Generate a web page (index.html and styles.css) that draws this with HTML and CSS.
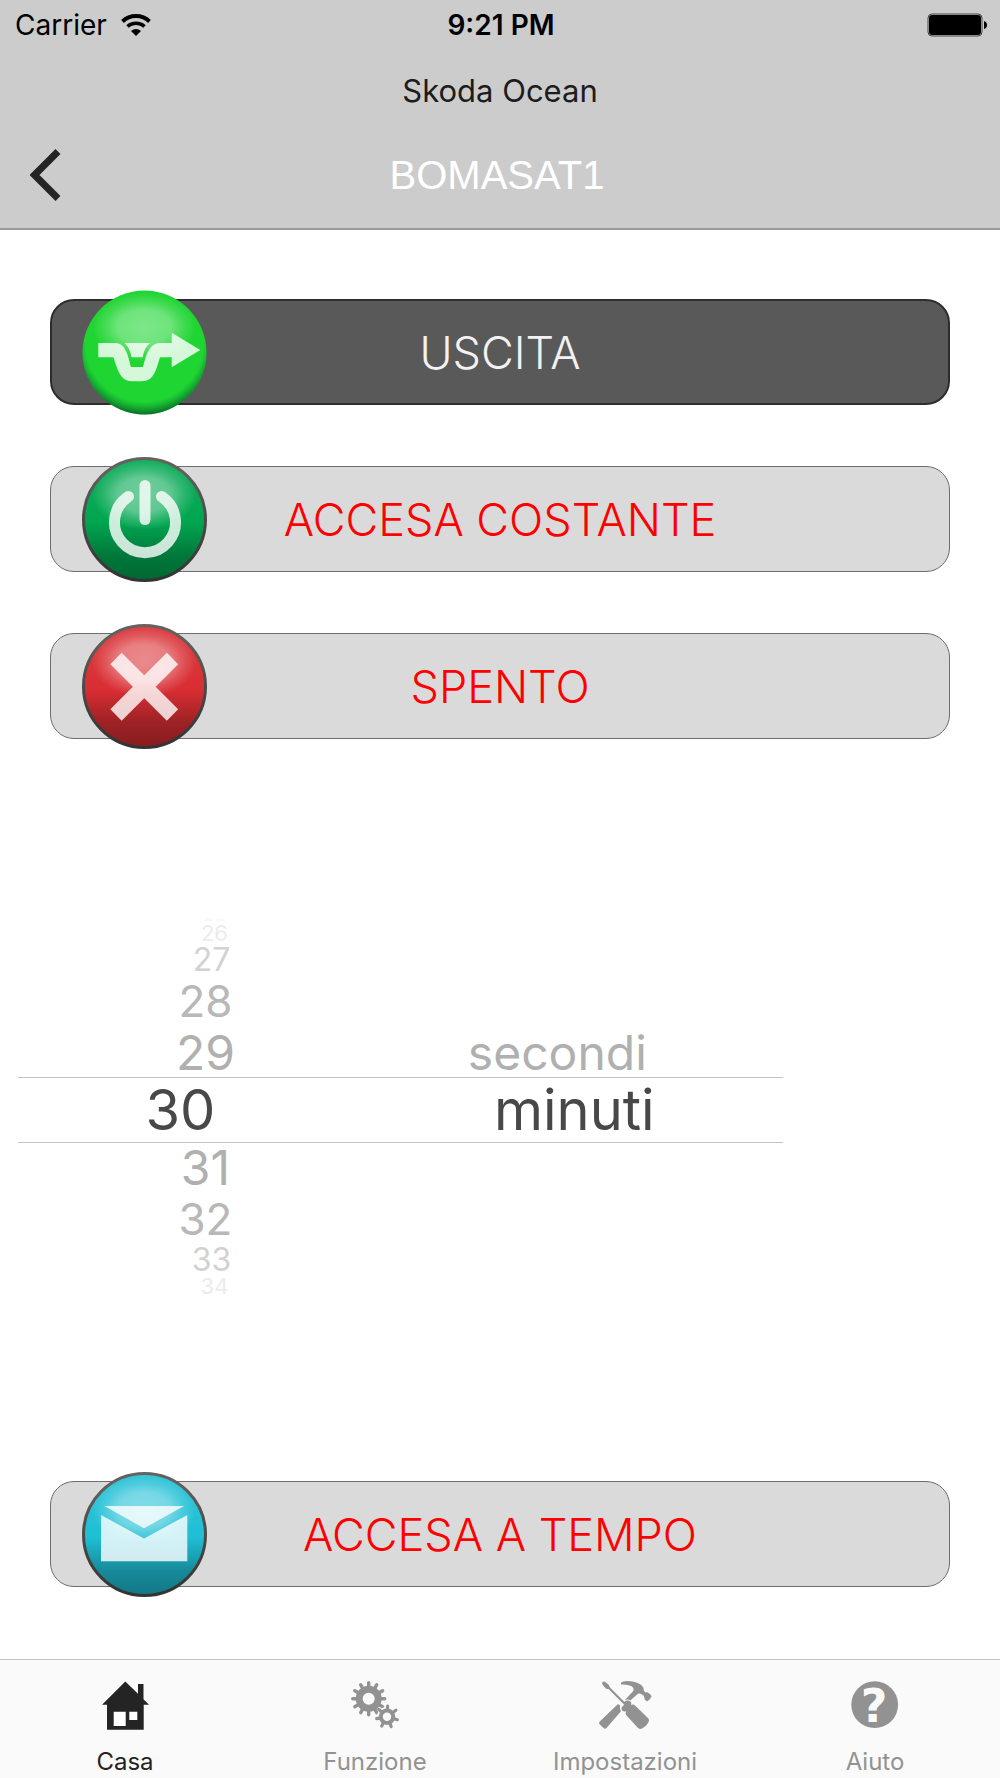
FILE: index.html
```html
<!DOCTYPE html>
<html lang="it">
<head>
<meta charset="UTF-8">
<meta name="viewport" content="width=device-width, initial-scale=1.0">
<title>BOMASAT1</title>
<link rel="stylesheet" href="styles.css">
</head>
<body>
    <header class="header">
        <div class="status">
            <div class="carrier">
                <span>Carrier</span>
                <svg width="30" height="22" viewBox="0 0 30 22" fill="none" stroke="#000" stroke-width="4">
                    <path d="M1.500 7.500C9 .3 21 .3 28.500 7.500"/>
                    <path d="M6.500 12.500C11 8.200 19 8.200 23.500 12.500" stroke-width="3.500"/>
                    <path d="M10 17C13 14.200 17 14.200 20 17L15 22Z" fill="#000" stroke="none"/>
                </svg>
            </div>
            <span class="time">9:21 PM</span>
            <svg class="battery" width="60" height="24" viewBox="0 0 60 24">
                <rect x="1" y="1" width="54" height="22" rx="4" fill="none" stroke="#444"/>
                <rect x="2" y="2" width="52" height="20" rx="3"/>
                <path d="M57 8q3 1 3 4t-3 4z"/>
            </svg>
        </div>
        <p class="vehicle">Skoda Ocean</p>
        <div class="nav">
            <button class="back" aria-label="Indietro">
                <svg width="31" height="52" viewBox="0 0 31 52"><path d="M28 2.500L4.500 26L28 49.500" fill="none" stroke="#242424" stroke-width="7"/></svg>
            </button>
            <h1>BOMASAT1</h1>
        </div>
    </header>

    <main class="main">
        <button class="action dark">
            <svg class="ball" viewBox="0 0 125 125">
                <defs>
                    <linearGradient id="gloss" x1="0" y1="0" x2="0" y2="1">
                        <stop offset="0" stop-color="#fff" stop-opacity=".08"/>
                        <stop offset=".5" stop-color="#fff" stop-opacity="0"/>
                        <stop offset=".52" stop-color="#000" stop-opacity="0"/>
                        <stop offset=".8" stop-color="#000" stop-opacity=".28"/>
                        <stop offset="1" stop-color="#000" stop-opacity=".38"/>
                    </linearGradient>
                    <radialGradient id="shine">
                        <stop offset="0" stop-color="#fff" stop-opacity=".42"/>
                        <stop offset=".5" stop-color="#fff" stop-opacity=".36"/>
                        <stop offset=".75" stop-color="#fff" stop-opacity=".16"/>
                        <stop offset="1" stop-color="#fff" stop-opacity="0"/>
                    </radialGradient>
                    <radialGradient id="edge" cx=".5" cy=".42" r=".58">
                        <stop offset=".82" stop-color="#063" stop-opacity="0"/>
                        <stop offset="1" stop-color="#032" stop-opacity=".65"/>
                    </radialGradient>
                    <linearGradient id="rim" x1="0" y1="0" x2="0" y2="1">
                        <stop offset="0" stop-color="#66625f"/>
                        <stop offset="1" stop-color="#333"/>
                    </linearGradient>
                </defs>
                <circle cx="62.500" cy="62.500" r="62" fill="#1fd532"/>
                <circle cx="62.500" cy="62.500" r="62" fill="url(#edge)"/>
                <ellipse cx="62" cy="37" rx="52" ry="35" fill="url(#shine)"/>
                <g fill="#fff" fill-opacity=".82">
                    <path d="M16.300 53H33C44 53 46 66 49 77H61C64 66 67 53 78 53H89.700V42.700L118.300 60L89.700 77.300V67.300H78C74 80 72 91.300 60 91.300H50C38 91.300 36 80 31.300 67.300H16.300Z"/>
                    <path d="M42.500 53H68Q62 58 60.700 67.300H49.500Q48 58 42.500 53Z"/>
                </g>
            </svg>
            USCITA
        </button>
        <button class="action">
            <svg class="ball" viewBox="0 0 125 125">
                <circle cx="62.500" cy="62.500" r="61" fill="#00a650"/>
                <circle cx="62.500" cy="62.500" r="61" fill="url(#gloss)" stroke="url(#rim)" stroke-width="3"/>
                <ellipse cx="62" cy="38" rx="52" ry="35" fill="url(#shine)"/>
                <g fill="none" stroke="#fff" stroke-opacity=".8" stroke-width="11" stroke-linecap="round">
                    <path d="M63 28.500V62.500"/>
                    <path d="M46.500 39.500A30.500 30.500 0 1 0 79.500 39.500"/>
                </g>
            </svg>
            ACCESA COSTANTE
        </button>
        <button class="action">
            <svg class="ball" viewBox="0 0 125 125">
                <circle cx="62.500" cy="62.500" r="61" fill="#d92e33"/>
                <circle cx="62.500" cy="62.500" r="61" fill="url(#gloss)" stroke="url(#rim)" stroke-width="3"/>
                <ellipse cx="62" cy="38" rx="52" ry="35" fill="url(#shine)"/>
                <path d="M34 34.500L90.500 91M90.500 34.500L34 91" fill="none" stroke="#fff" stroke-width="16" opacity=".8"/>
            </svg>
            SPENTO
        </button>

        <div class="picker">
            <div class="row r5"><span>25</span></div>
            <div class="row r4"><span>26</span></div>
            <div class="row r3"><span>27</span></div>
            <div class="row r2"><span>28</span></div>
            <div class="row r1"><span>29</span><span>secondi</span></div>
            <div class="row selected"><span>30</span><span>minuti</span></div>
            <div class="row r1"><span>31</span></div>
            <div class="row r2"><span>32</span></div>
            <div class="row r3"><span>33</span></div>
            <div class="row r4"><span>34</span></div>
        </div>

        <button class="action">
            <svg class="ball" viewBox="0 0 125 125">
                <circle cx="62.500" cy="62.500" r="61" fill="#1fbfd5"/>
                <circle cx="62.500" cy="62.500" r="61" fill="url(#gloss)" stroke="url(#rim)" stroke-width="3"/>
                <ellipse cx="62" cy="38" rx="52" ry="35" fill="url(#shine)"/>
                <path d="M22.500 34H102L62 56.300ZM19 43L62 66.500L105.300 43V89.300H19Z" fill="#fff" fill-opacity=".8"/>
            </svg>
            ACCESA A TEMPO
        </button>
    </main>

    <nav class="tabs">
        <a class="tab active" href="#casa">
            <svg width="56" height="52" viewBox="0 0 56 52">
                <path d="M28.300 1.500L41 13.800V4H46.500V19.200L52 24.700H46.700V49.700H10V24.700H5Z" fill="currentColor"/>
                <path d="M16.700 31.700H28.700V46H16.700ZM32.300 31.700H40.300V40H32.300Z" fill="#fff"/>
            </svg>
            Casa
        </a>
        <a class="tab" href="#funzione">
            <svg width="56" height="52" viewBox="0 0 56 52">
                <g transform="translate(21.700 18.700)">
                    <path d="M0-16V16M-16 0H16M8-13.900L-8 13.900M13.900-8L-13.900 8M-8-13.900L8 13.900M-13.900-8L13.900 8" stroke="currentColor" stroke-width="3.400" stroke-linecap="round"/>
                    <circle r="13" fill="currentColor"/>
                    <circle r="6" fill="#fafafa"/>
                </g>
                <g transform="translate(40 36.700)">
                    <circle r="10" fill="#fafafa"/>
                    <path d="M0 0L.6-10.500M0 0L8.900-6.400M0 0L10.300 3M0 0L4.200 9.800M0 0L-5.300 9.300M0 0L-10.300 1.900M0 0L-8.200-7.300" stroke="currentColor" stroke-width="3.200" stroke-linecap="round"/>
                    <circle r="8.300" fill="currentColor"/>
                    <circle r="4.200" fill="#fafafa"/>
                </g>
            </svg>
            Funzione
        </a>
        <a class="tab" href="#impostazioni">
            <svg width="56" height="52" viewBox="0 0 56 52" fill="currentColor">
                <path d="M24 2.500Q26 1 30 1Q42 1 46.300 7.500Q46.500 11 48.500 12.500Q51 11.500 54.500 16Q54.500 18 50.500 21.300Q47 20.500 47 16Q44 12.500 41 13.700L33.500 20.200Q30 19 27.700 20.200L36.500 10.700Q37 7 34 6Q30 4 24 4.500Z"/>
                <path d="M21 24L23 25.500Q22.500 29 24 31.300L9.500 48Q8 49.500 6.500 48L2.300 44Q1.500 42.500 3 41.300Z"/>
                <path d="M5 3.500Q5.500 1 7.500 1.500L12 5L13 9H9.500L7 6.500Z"/>
                <path d="M11 7L28 24" fill="none" stroke="currentColor" stroke-width="2.200"/>
                <path d="M27 22Q31 19.500 33.500 21.500Q35 23 34 25Q36.500 24 38 25.500L51 38Q53 40 51 43Q49 47 45 48.500Q43 49.500 41 48L29.500 35.500Q28 34 29 31.300Q25.500 32 24.500 29.500Q24 27 27 25Z"/>
            </svg>
            Impostazioni
        </a>
        <a class="tab" href="#aiuto">
            <svg width="56" height="52" viewBox="0 0 56 52">
                <circle cx="27.700" cy="24.700" r="23.400" fill="currentColor"/>
                <text class="mark" x="27" y="42" text-anchor="middle">?</text>
            </svg>
            Aiuto
        </a>
    </nav>
</body>
</html>
```
FILE: styles.css
```css
* {
    box-sizing: border-box;
}
body {
    margin: 0;
    min-height: 100vh;
    display: flex;
    flex-direction: column;
    background: #fff;
    font-family: Inter, "Liberation Sans", sans-serif;
}
svg {
    display: block;
}
button {
    font-family: inherit;
    cursor: pointer;
}

/* header */
.header {
    background: #ccc;
    border-bottom: 2px solid #999;
    padding-bottom: 10px;
}
.status {
    display: grid;
    grid-template-columns: 1fr auto 1fr;
    align-items: center;
    height: 50px;
    padding: 0 13px 0 15px;
    font-size: 28px;
    color: #000;
}
.carrier {
    display: flex;
    align-items: center;
    gap: 14px;
}
.time {
    font-weight: 600;
}
.battery {
    justify-self: end;
}
.vehicle {
    margin: 0;
    line-height: 82px;
    text-align: center;
    font-size: 31px;
    color: #1c1c1c;
}
.nav {
    display: grid;
    grid-template-columns: 90px 1fr 96px;
    align-items: center;
    height: 86px;
}
.back {
    background: none;
    border: none;
    padding: 0 30px;
}
h1 {
    margin: 0;
    text-align: center;
    font-family: "Liberation Sans", Arial, sans-serif;
    font-size: 40px;
    font-weight: 400;
    color: #fff;
}

/* content */
.main {
    flex: 1;
    display: flex;
    flex-direction: column;
    gap: 61px;
    padding: 69px 50px 72px;
}
.action {
    position: relative;
    width: 100%;
    height: 106px;
    padding: 0;
    background: #dadada;
    border: 1px solid #6e6e6e;
    border-radius: 24px;
    font-size: 45px;
    font-weight: 300;
    color: #f00;
}
.action.dark {
    background: #595959;
    border: 2px solid #2d2d2d;
    color: #f2f2f2;
}
.ball {
    position: absolute;
    left: 31px;
    top: -10px;
    width: 125px;
    height: 125px;
}
.dark .ball {
    left: 30px;
    top: -11px;
}

/* picker wheel */
.picker {
    margin: auto 167px auto -32px;
    padding-bottom: 4px;
}
.row {
    display: grid;
    grid-template-columns: 49% 43%;
    align-items: center;
    text-align: center;
    line-height: 1;
}
.selected {
    height: 66px;
    border-top: 1px solid #c4c4c4;
    border-bottom: 1px solid #c4c4c4;
    font-size: 56px;
    color: #484848;
}
.selected span:first-child {
    padding-right: 50px;
}
.selected span:last-child {
    padding-left: 34px;
}
.r1 {
    height: 49px;
    font-size: 48px;
    color: #b0b0b0;
}
.r2 {
    height: 54px;
    font-size: 44px;
    color: #b8b8b8;
}
.r3 {
    height: 28px;
    font-size: 32px;
    line-height: 28px;
    color: #d2d2d2;
    padding-left: 8px;
}
.r4 {
    height: 25px;
    font-size: 22px;
    line-height: 25px;
    color: #ececec;
    padding-left: 12px;
}
.r5 {
    height: 4px;
    overflow: hidden;
    font-size: 20px;
    color: #f6f6f6;
    padding-left: 12px;
}

/* bottom tabs */
.tabs {
    display: grid;
    grid-template-columns: repeat(4, 1fr);
    background: #fafafa;
    border-top: 1px solid #c0c0c0;
}
.tab {
    display: flex;
    flex-direction: column;
    align-items: center;
    gap: 16px;
    padding: 20px 0 2px;
    font-size: 24px;
    line-height: 28px;
    color: #929292;
    text-decoration: none;
}
.tab.active {
    color: #242424;
}
.mark {
    font-family: "DejaVu Sans", sans-serif;
    font-size: 46px;
    font-weight: 700;
    fill: #fafafa;
}
```
